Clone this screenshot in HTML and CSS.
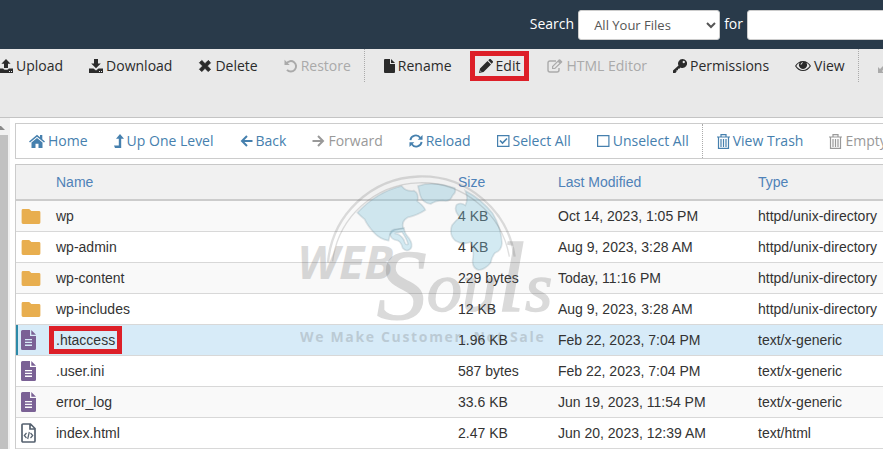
FILE: index.html
```
<!DOCTYPE html>
<html lang="en">
<head>
  <meta charset="UTF-8" />
  <meta name="viewport" content="width=device-width, initial-scale=1" />
  <title>File Manager</title>
  <link rel="stylesheet" href="styles.css">
</head>
<body>

  <!-- Icon set -->
  <svg class="sprite" aria-hidden="true">
    <symbol id="i-upload" viewBox="0 0 14 14"><path d="M7 0l4.600 4.800H9V9H5V4.800H2.400zM0 9.500h4.200c.3 1 1.200 1.300 2.800 1.300s2.500-.3 2.800-1.300H14V14H0zm10 2.500v1h1v-1zm2 0v1h1v-1z" fill-rule="evenodd"/></symbol>
    <symbol id="i-download" viewBox="0 0 14 14"><path d="M5 0h4v4.500h2.800L7 9.300 2.200 4.500H5zM0 9.500h4.500L7 11.500l2.500-2H14V14H0zm10 2.500v1h1v-1zm2 0v1h1v-1z" fill-rule="evenodd"/></symbol>
    <symbol id="i-delete" viewBox="0 0 14 14"><path d="M3.800 1.500L7 4.700l3.200-3.200 2.300 2.300L9.300 7l3.200 3.200-2.300 2.300L7 9.300l-3.200 3.200-2.300-2.300L4.700 7 1.500 3.800z" stroke="currentColor" stroke-linejoin="round"/></symbol>
    <symbol id="i-restore" viewBox="0 0 14 14"><path d="M2.500 4.500A5.200 5.200 0 1 1 3 10.800" fill="none" stroke="currentColor" stroke-width="2"/><path d="M.5.800v5.200h5.200z"/></symbol>
    <symbol id="i-file" viewBox="0 0 11 14"><path d="M1 0h5v5h5v8q0 1-1 1H1q-1 0-1-1V1q0-1 1-1zM7 0l4 4H7z"/></symbol>
    <symbol id="i-pencil" viewBox="0 0 14 14"><path d="M0 14l1-4.500L8.500 2 12 5.500 4.500 13zM9.300 1.200L10.500 0q.7-.4 1.300.2l2 2q.5.600 0 1.300l-1.200 1.200zM1.500 11.500l-.3 1.300 1.300-.3z" fill-rule="evenodd"/></symbol>
    <symbol id="i-edit" viewBox="0 0 16 14"><path d="M9 2H3Q1 2 1 4v7q0 2 2 2h7q2 0 2-2V9" fill="none" stroke="currentColor" stroke-width="1.400"/><path d="M5 10V7.300L11.800.500q.7-.6 1.400 0L15 2.300q.6.600 0 1.300L8 10zm1.200-2.300v1.200h1.300l4.800-4.700-1.300-1.300z" fill-rule="evenodd"/></symbol>
    <symbol id="i-key" viewBox="0 0 14 14"><path d="M9.500 0a4.500 4.500 0 1 1-2 8.500L6.300 9.700H5v1.500H3.500v1.500L2.300 14H0v-2.500l5.500-5A4.500 4.500 0 0 1 9.500 0zm1.200 1.800a1.200 1.200 0 1 0 .1 0z" fill-rule="evenodd"/></symbol>
    <symbol id="i-eye" viewBox="0 0 16 14"><path d="M8 2c3.500 0 6.200 2 8 5-1.800 3-4.500 5-8 5s-6.200-2-8-5c1.800-3 4.500-5 8-5zM4.600 3.800C3.200 4.500 2.100 5.600 1.300 7c1.500 2.400 3.900 3.900 6.700 3.900s5.200-1.500 6.700-3.900c-.8-1.400-1.900-2.500-3.300-3.200A4 4 0 1 1 4.600 3.800zM8 3.200a2.600 2.600 0 0 0-2.500 2.600h.9A1.700 1.700 0 0 1 8 4.100z" fill-rule="evenodd"/></symbol>
    <symbol id="i-expand" viewBox="0 0 14 14"><path d="M0 8l2 2 3-3 2 2-3 3 2 2H0zM14 6l-2-2-3 3-2-2 3-3-2-2h6z"/></symbol>
    <symbol id="i-home" viewBox="0 0 16 14"><path d="M8 .8l3 2.500V1h2.300v4.200L16 7.600l-1 1L8 2.800 1 8.600l-1-1zM8 4l5.500 4.500V14H9.500V9.800h-3V14h-4V8.500z"/></symbol>
    <symbol id="i-up" viewBox="0 0 10 14"><path d="M6 0l4 4.700H7.200V14H1l-1-2.500h4.800V4.700H2z"/></symbol>
    <symbol id="i-back" viewBox="0 0 13 14"><path d="M12.500 7H2M7 2L2 7l5 5" fill="none" stroke="currentColor" stroke-width="2"/></symbol>
    <symbol id="i-forward" viewBox="0 0 13 14"><path d="M.5 7H11M6 2l5 5-5 5" fill="none" stroke="currentColor" stroke-width="2"/></symbol>
    <symbol id="i-reload" viewBox="0 0 15 14"><path d="M1.500 6A5.800 5.800 0 0 1 12 3.500M13.500 8A5.800 5.800 0 0 1 3 10.500" fill="none" stroke="currentColor" stroke-width="2"/><path d="M14.500.5v5.200H9.300zM.5 13.500V8.300h5.200z"/></symbol>
    <symbol id="i-checked" viewBox="0 0 13 14"><path d="M.6 1.600h11.300v10.800H.6z" fill="none" stroke="currentColor" stroke-width="1.200"/><path d="M3 6.500l2.500 2.600L10 4.500" fill="none" stroke="currentColor" stroke-width="1.600"/></symbol>
    <symbol id="i-unchecked" viewBox="0 0 13 14"><path d="M.6 1.600h11.300v10.800H.6z" fill="none" stroke="currentColor" stroke-width="1.200"/></symbol>
    <symbol id="i-trash" viewBox="0 0 13 15"><path d="M0 3h13M4 3V.7h5V3M1.500 3v11.300h10V3M4 5v8M6.500 5v8M9 5v8" fill="none" stroke="currentColor" stroke-width="1.200"/></symbol>
    <symbol id="i-folder" viewBox="0 0 20 16"><path d="M1.500 0h6q1 0 1.800 1l1 1h8.200Q20 2 20 3.500v11q0 1.500-1.500 1.500h-17Q0 16 0 14.500v-13Q0 0 1.500 0z"/></symbol>
    <symbol id="i-text" viewBox="0 0 15 20"><path d="M1.500 0H9v6h6v12.500q0 1.500-1.500 1.500h-12Q0 20 0 18.500v-17Q0 0 1.500 0zM10.300 0L15 4.700h-4.700zM4 9v1.300h7V9zm0 2.800v1.300h7v-1.300zm0 2.800v1.300h7v-1.300z" fill-rule="evenodd"/></symbol>
    <symbol id="i-code" viewBox="0 0 15 20"><path d="M2 1h7.500L14 5.500V18q0 1-1 1H2q-1 0-1-1V2q0-1 1-1zM9 1v5h5" fill="none" stroke="currentColor" stroke-width="1.700"/><path d="M5.500 10L3.300 12.500 5.500 15M9.500 10l2.200 2.500L9.500 15M8.300 9l-1.600 7" fill="none" stroke="currentColor" stroke-width="1.200"/></symbol>
  </svg>

  <header class="topbar">
    <form class="search">
      <label for="scope">Search</label>
      <select id="scope">
        <option>All Your Files</option>
      </select>
      <label for="query">for</label>
      <input id="query" type="text">
    </form>
  </header>

  <nav class="toolbar">
    <button><svg class="w14"><use href="#i-upload"/></svg>Upload</button>
    <button><svg class="w14"><use href="#i-download"/></svg>Download</button>
    <button><svg class="w14"><use href="#i-delete"/></svg>Delete</button>
    <button class="last" disabled><svg class="w14"><use href="#i-restore"/></svg>Restore</button>
    <button><svg class="w11"><use href="#i-file"/></svg>Rename</button>
    <button><span class="callout"><svg class="w14"><use href="#i-pencil"/></svg>Edit</span></button>
    <button disabled><svg class="w16"><use href="#i-edit"/></svg>HTML Editor</button>
    <button><svg class="w14"><use href="#i-key"/></svg>Permissions</button>
    <button class="last"><svg class="w16"><use href="#i-eye"/></svg>View</button>
    <button disabled aria-label="Extract"><svg class="w14"><use href="#i-expand"/></svg></button>
  </nav>

  <div class="workspace">
    <div class="scrollbar"><span class="arrow"></span><span class="thumb"></span></div>

    <main>
      <nav class="actions">
        <button><svg class="w16"><use href="#i-home"/></svg>Home</button>
        <button><svg class="w10"><use href="#i-up"/></svg>Up One Level</button>
        <button><svg class="w13"><use href="#i-back"/></svg>Back</button>
        <button disabled><svg class="w13"><use href="#i-forward"/></svg>Forward</button>
        <button><svg class="w14"><use href="#i-reload"/></svg>Reload</button>
        <button><svg class="w13"><use href="#i-checked"/></svg>Select All</button>
        <button class="last"><svg class="w13"><use href="#i-unchecked"/></svg>Unselect All</button>
        <button><svg class="w13 tall"><use href="#i-trash"/></svg>View Trash</button>
        <button disabled><svg class="w13 tall"><use href="#i-trash"/></svg>Empty Trash</button>
      </nav>

      <div class="files">
        <table>
          <colgroup>
            <col class="col-icon"><col><col class="col-size"><col class="col-date"><col class="col-type">
          </colgroup>
          <thead>
            <tr>
              <th></th>
              <th><a href="#">Name</a></th>
              <th><a href="#">Size</a></th>
              <th><a href="#">Last Modified</a></th>
              <th><a href="#">Type</a></th>
            </tr>
          </thead>
          <tbody>
            <tr><td><svg class="folder"><use href="#i-folder"/></svg></td><td>wp</td><td>4 KB</td><td>Oct 14, 2023, 1:05 PM</td><td>httpd/unix-directory</td></tr>
            <tr><td><svg class="folder"><use href="#i-folder"/></svg></td><td>wp-admin</td><td>4 KB</td><td>Aug 9, 2023, 3:28 AM</td><td>httpd/unix-directory</td></tr>
            <tr><td><svg class="folder"><use href="#i-folder"/></svg></td><td>wp-content</td><td>229 bytes</td><td>Today, 11:16 PM</td><td>httpd/unix-directory</td></tr>
            <tr><td><svg class="folder"><use href="#i-folder"/></svg></td><td>wp-includes</td><td>12 KB</td><td>Aug 9, 2023, 3:28 AM</td><td>httpd/unix-directory</td></tr>
            <tr class="selected"><td><svg class="doc"><use href="#i-text"/></svg></td><td><span class="callout">.htaccess</span></td><td>1.96 KB</td><td>Feb 22, 2023, 7:04 PM</td><td>text/x-generic</td></tr>
            <tr><td><svg class="doc"><use href="#i-text"/></svg></td><td>.user.ini</td><td>587 bytes</td><td>Feb 22, 2023, 7:04 PM</td><td>text/x-generic</td></tr>
            <tr><td><svg class="doc"><use href="#i-text"/></svg></td><td>error_log</td><td>33.6 KB</td><td>Jun 19, 2023, 11:54 PM</td><td>text/x-generic</td></tr>
            <tr><td><svg class="doc code"><use href="#i-code"/></svg></td><td>index.html</td><td>2.47 KB</td><td>Jun 20, 2023, 12:39 AM</td><td>text/html</td></tr>
          </tbody>
        </table>

        <!-- Websouls watermark over the list -->
        <svg class="watermark" viewBox="0 0 840 600">
          <g class="land">
            <path d="M232 158Q290 96 365 78Q378 96 402 92Q418 100 412 124Q430 136 436 150Q412 166 384 172Q362 184 370 206Q340 206 330 224L326 242Q300 238 282 218Q262 196 254 178Q244 170 232 158z"/>
            <path d="M330 222Q334 206 352 208L372 204Q372 218 388 236Q400 254 392 266Q380 278 368 264Q362 240 346 240Q332 236 330 222zM344 220Q362 222 372 240Q376 258 384 252Q380 236 366 216z" fill-rule="evenodd"/>
            <path d="M414 78Q460 62 524 84Q530 96 518 106Q510 128 488 122Q466 122 452 132Q426 128 420 104z"/>
            <path d="M556 92Q606 118 638 160Q664 204 666 250Q664 272 646 278Q636 288 632 308Q616 328 596 330Q576 324 578 300Q584 270 572 246Q550 256 526 242Q506 224 516 196Q528 180 540 172Q520 150 530 134Q544 126 556 136Q566 116 556 92z"/>
          </g>
          <path class="ring" d="M144 308A282 282 0 0 1 704 290" stroke-width="7"/>
          <path class="ring" d="M158 304A268 268 0 0 1 688 290" stroke-width="4"/>
          <text class="web" x="52" y="358">WEB</text>
          <text class="souls" x="290" y="474"><tspan class="big">S</tspan><tspan dy="-22">ou</tspan><tspan class="big">l</tspan><tspan>s</tspan></text>
          <text class="tagline" x="60" y="545">We Make Customer, Not Sale</text>
        </svg>
      </div>
    </main>
  </div>

</body>
</html>
```
FILE: styles.css
```
* {
  box-sizing: border-box;
}
body {
  margin: 0;
  font-family: "Open Sans", sans-serif;
  font-size: 14px;
  line-height: 20px;
  color: #333;
  background: #fff;
  overflow: hidden;
}
svg {
  fill: currentColor;
  flex: none;
}
.sprite {
  display: none;
}
/* Top bar */
.topbar {
  background: #293a4a;
  padding: 10px 0 9px 60%;
  overflow: hidden;
}
.search {
  display: flex;
  align-items: center;
  gap: 4px;
  color: #fff;
}
.search label {
  flex: none;
  padding-bottom: 2px;
}
.search select,
.search input {
  flex: none;
  height: 30px;
  border: 1px solid #ccc;
  border-radius: 3px;
  background: #fff;
  color: #555;
  font: 13px "Open Sans", sans-serif;
}
.search select {
  width: 142px;
  padding: 0 0 0 11px;
}
.search input {
  width: 300px;
  padding: 0 10px;
}
/* Toolbars */
.toolbar,
.actions {
  display: flex;
  overflow: hidden;
}
.toolbar {
  background: #e9e9e9;
  border-bottom: 1px solid #c4c4c4;
  padding-bottom: 35px;
}
.toolbar button:first-child {
  margin-left: -14px;
}
button {
  display: flex;
  flex: none;
  align-items: center;
  gap: 3px;
  height: 33px;
  margin: 0;
  padding: 0 13px;
  border: 0;
  background: none;
  color: #2b2b2b;
  font: 14px/20px "Open Sans", sans-serif;
  white-space: nowrap;
  cursor: pointer;
}
button.last {
  border-right: 1px dotted #aaa;
}
button.last + button {
  padding-left: 19px;
}
button svg {
  height: 14px;
}
button svg.tall {
  height: 15px;
}
.w10 { width: 10px; }
.w11 { width: 11px; }
.w13 { width: 13px; }
.w14 { width: 14px; }
.w16 { width: 16px; }
.actions {
  border: 1px solid #ccc;
  border-right: 0;
}
.actions button {
  height: 34px;
  color: #4680ae;
}
.actions button.last + button {
  padding-left: 14px;
}
.toolbar button:disabled {
  color: #aaa;
  cursor: default;
}
.actions button:disabled {
  color: #999;
  cursor: default;
}
/* Red highlight frame */
.callout {
  position: relative;
  display: inline-flex;
  align-items: center;
  gap: 3px;
}
.callout::after {
  content: "";
  position: absolute;
  inset: -4px -7px;
  border: 5px solid #dd1f28;
}
.toolbar .callout {
  padding: 0 1px;
}
.toolbar .callout::after {
  inset: -5px -8px;
}
/* Workspace */
.workspace {
  display: flex;
}
.scrollbar {
  display: flex;
  flex-direction: column;
  width: 10px;
  background: #f1f1f1;
}
.scrollbar .arrow {
  margin: 8px 0 5px;
  width: 5px;
  height: 4px;
  background: #8a8a8a;
  clip-path: polygon(0 0, 20% 0, 100% 100%, 0 100%);
}
.scrollbar .thumb {
  flex: 1;
  width: 8px;
  background: #c1c1c1;
}
main {
  flex: 1;
  min-width: 0;
  padding: 5px 0 0 5px;
}
/* File list */
.files {
  position: relative;
  margin-top: 5px;
  border-top: 1px solid #c8c8c8;
  border-left: 1px solid #ccc;
}
table {
  width: 100%;
  table-layout: fixed;
  border-collapse: separate;
  border-spacing: 0;
  font-family: "Liberation Sans", Arial, sans-serif;
}
.col-icon { width: 40px; }
.col-size { width: 100px; }
.col-date { width: 200px; }
.col-type { width: 125px; }
th,
td {
  padding: 0;
  text-align: left;
  font-weight: normal;
  white-space: nowrap;
}
th {
  height: 36px;
  background: #f1f1f1;
  border-bottom: 2px solid #ccc;
}
th a {
  color: #4f82b8;
  text-decoration: none;
}
td {
  height: 31px;
  border-bottom: 1px solid #d8d8d8;
}
td:first-child {
  padding-left: 5px;
}
td svg {
  display: block;
}
tbody tr:nth-child(odd) {
  background: #f9f9f9;
}
tbody tr.selected {
  background: #d7ebf8;
  box-shadow: inset 2px 0 #2c8aa8;
}
.folder {
  width: 20px;
  height: 15px;
  color: #e8ae4f;
}
.doc {
  width: 15px;
  height: 20px;
  color: #7a6195;
}
.doc.code {
  color: #566270;
}
/* Watermark */
.watermark {
  position: absolute;
  top: -5px;
  left: 264px;
  width: 280px;
  height: 200px;
  pointer-events: none;
}
.land {
  fill: rgba(130, 195, 218, 0.35);
  stroke: rgba(110, 130, 140, 0.2);
  stroke-width: 5px;
}
.ring {
  fill: none;
  stroke: rgba(90, 90, 90, 0.2);
}
.watermark text {
  fill: #5a5a5a;
  opacity: 0.22;
}
.web {
  font: italic bold 140px "Open Sans", sans-serif;
}
.watermark .souls {
  font: italic 212px "Liberation Serif", serif;
  stroke: #5a5a5a;
  stroke-width: 4px;
}
.souls .big {
  font-size: 300px;
}
.tagline {
  font: bold 42px "Open Sans", sans-serif;
  letter-spacing: 5px;
}
```
